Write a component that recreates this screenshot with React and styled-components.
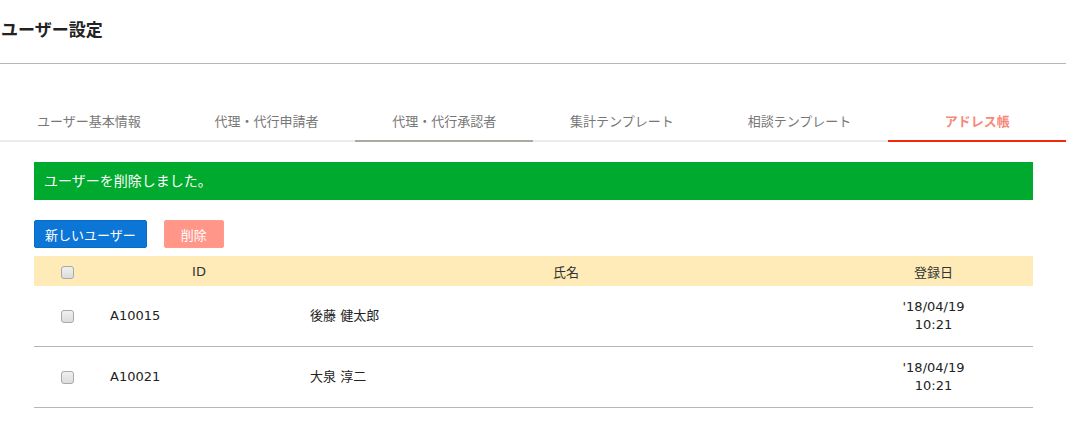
import React from 'react';
import styled, { createGlobalStyle } from 'styled-components';

const GlobalStyle = createGlobalStyle`
  body {
    margin: 0;
    background: #fff;
    color: #333;
    font-family: 'DejaVu Sans', Verdana, 'Noto Sans CJK JP', sans-serif;
    font-size: 13px;
  }
`;

const StyledPage = styled.div`
  width: 1066px;
`;

const Title = styled.h1`
  margin: 20px 0 0 1px;
  font-size: 17px;
  line-height: 20px;
  font-weight: bold;
  color: #222;
`;

const Rule = styled.hr`
  margin: 23px 0 0;
  border: 0;
  border-top: 1px solid #b9b6af;
`;

const TabList = styled.ul`
  display: flex;
  list-style: none;
  margin: 38px 0 0;
  padding: 0;
`;

const Tab = styled.li`
  flex: 1;
  text-align: center;
  padding: 11px 0 9px;
  line-height: 18px;
  font-size: 13px;
  color: ${(p) => (p.$active ? '#f68a7a' : '#777')};
  font-weight: ${(p) => (p.$active ? 'bold' : 'normal')};
  border-bottom: 2px solid
    ${(p) => (p.$active ? '#f0290e' : p.$hover ? '#aca8a2' : '#ececec')};
`;

const Content = styled.section`
  padding: 20px 33px 0 34px;
`;

const Alert = styled.div`
  background: #00aa2e;
  color: #fff;
  font-size: 14px;
  line-height: 38px;
  padding: 0 10px;
`;

const Toolbar = styled.div`
  display: flex;
  gap: 17px;
  margin-top: 20px;
`;

const Button = styled.button`
  height: 28px;
  padding: 0 ${(p) => (p.$danger ? '16px' : '10px')};
  border: 1px solid ${(p) => (p.$danger ? '#ff9a8c' : '#0a6cc8')};
  border-radius: 2px;
  background: ${(p) => (p.$danger ? '#ff9687' : '#0b76d6')};
  color: #fff;
  font-family: inherit;
  font-size: 13px;
`;

const Table = styled.table`
  width: 100%;
  margin-top: 8px;
  border-collapse: collapse;
  table-layout: fixed;
`;

const Th = styled.th`
  background: #ffebb8;
  height: 30px;
  padding: 0;
  font-weight: normal;
  text-align: center;
  color: #333;
`;

const Td = styled.td`
  height: 60px;
  padding: 0 0 0 ${(p) => p.$indent || 0}px;
  text-align: ${(p) => (p.$indent ? 'left' : 'center')};
  border-bottom: 1px solid #b9b6af;
  line-height: 18px;
  color: #222;
`;

const Check = styled.input.attrs({ type: 'checkbox' })`
  appearance: none;
  width: 13px;
  height: 13px;
  margin: 0;
  vertical-align: middle;
  border: 1px solid #a9a9a9;
  border-radius: 3px;
  background: linear-gradient(#f0f0f0, #dcdcdc);
`;

const tabs = ['ユーザー基本情報', '代理・代行申請者', '代理・代行承認者', '集計テンプレート', '相談テンプレート', 'アドレス帳'];

const users = [
  { id: 'A10015', name: '後藤 健太郎', date: "'18/04/19", time: '10:21' },
  { id: 'A10021', name: '大泉 淳二', date: "'18/04/19", time: '10:21' },
];

const App = () => (
  <StyledPage>
    <GlobalStyle />
    <Title>ユーザー設定</Title>
    <Rule />
    <TabList>
      {tabs.map((t, i) => (
        <Tab key={t} $hover={i === 2} $active={i === 5}>
          {t}
        </Tab>
      ))}
    </TabList>
    <Content>
      <Alert>ユーザーを削除しました。</Alert>
      <Toolbar>
        <Button>新しいユーザー</Button>
        <Button $danger>削除</Button>
      </Toolbar>
      <Table>
        <colgroup>
          <col style={{ width: 66 }} />
          <col style={{ width: 198 }} />
          <col style={{ width: 536 }} />
          <col />
        </colgroup>
        <thead>
          <tr>
            <Th><Check /></Th>
            <Th>ID</Th>
            <Th>氏名</Th>
            <Th>登録日</Th>
          </tr>
        </thead>
        <tbody>
          {users.map((u) => (
            <tr key={u.id}>
              <Td><Check /></Td>
              <Td $indent={10}>{u.id}</Td>
              <Td $indent={12}>{u.name}</Td>
              <Td>
                {u.date}
                <br />
                {u.time}
              </Td>
            </tr>
          ))}
        </tbody>
      </Table>
    </Content>
  </StyledPage>
);

export default App;
